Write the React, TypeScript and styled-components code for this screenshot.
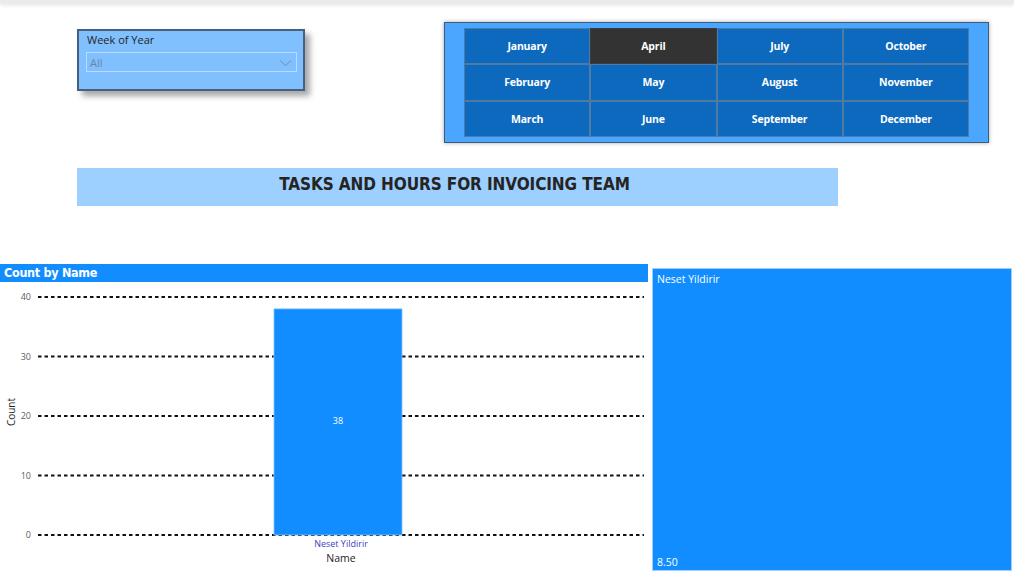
import React from "react";
import styled, { createGlobalStyle } from "styled-components";

const GlobalStyle = createGlobalStyle`
  html, body {
    margin: 0;
    padding: 0;
    background: #ffffff;
    font-family: "Open Sans", "Noto Sans", sans-serif;
  }
`;

const months = [
  ["January", "April", "July", "October"],
  ["February", "May", "August", "November"],
  ["March", "June", "September", "December"],
];

const selectedMonth = "April";

const Page = styled.div`
  width: 1014px;
  height: 573px;
  overflow: hidden;
  display: flex;
  flex-direction: column;
`;

const TopEdge = styled.div`
  height: 4px;
  background: #ebebeb;
  box-shadow: 0 1px 4px rgba(0, 0, 0, 0.12);
`;

const TopRow = styled.div`
  display: flex;
  align-items: flex-start;
  padding: 18px 0 0 77px;
  gap: 139px;
`;

const Slicer = styled.div`
  margin-top: 7px;
  width: 228px;
  height: 62px;
  box-sizing: border-box;
  background: #80c0ff;
  border: 2px solid #44617f;
  box-shadow: 5px 5px 6px rgba(0, 0, 0, 0.35);
  padding: 1px 6px 0 7px;
  display: flex;
  flex-direction: column;
`;

const SlicerTitle = styled.div`
  font-size: 11px;
  color: #252423;
  padding-left: 1px;
  line-height: 16px;
`;

const Dropdown = styled.div`
  margin-top: 4px;
  height: 20px;
  box-sizing: border-box;
  border: 1px solid #b8dbff;
  display: flex;
  align-items: center;
  justify-content: space-between;
  padding: 1px 4px 0 3px;
  font-size: 11px;
  color: #6c87a3;
`;

const MonthPanel = styled.div`
  width: 545px;
  height: 121px;
  box-sizing: border-box;
  background: #4aa6ff;
  border: 1px solid #3e5c7a;
  box-shadow: 0 0 4px rgba(0, 0, 0, 0.35);
  padding: 5px 19px 5px 19px;
`;

const MonthGrid = styled.div`
  display: grid;
  grid-template-columns: repeat(4, 1fr);
  grid-template-rows: repeat(3, 1fr);
  height: 100%;
`;

const MonthButton = styled.div<{ $active: boolean }>`
  display: flex;
  align-items: center;
  justify-content: center;
  box-sizing: border-box;
  border: 1px solid ${(p) => (p.$active ? "#3c3c3c" : "#4e7aa3")};
  background: ${(p) => (p.$active ? "#333333" : "#0d69bd")};
  color: #ffffff;
  font-weight: 700;
  font-size: 10.5px;
  letter-spacing: -0.2px;
`;

const TitleBand = styled.div`
  margin: 25px 0 0 77px;
  width: 761px;
  height: 38px;
  background: #9dcfff;
  display: flex;
  align-items: center;
  justify-content: center;
  padding: 0 6px 6px 0;
  box-sizing: border-box;
  font-family: "DejaVu Sans Condensed", "DejaVu Sans", sans-serif;
  font-stretch: condensed;
  font-weight: 700;
  font-size: 17px;
  color: #252423;
  letter-spacing: -0.1px;
`;

const BottomRow = styled.div`
  display: flex;
  margin-top: 58px;
  gap: 4px;
`;

const ChartPanel = styled.div`
  width: 648px;
  height: 307px;
  display: flex;
  flex-direction: column;
`;

const ChartHeader = styled.div`
  height: 18px;
  background: #118dff;
  color: #ffffff;
  font-family: "DejaVu Sans Condensed", "DejaVu Sans", sans-serif;
  font-stretch: condensed;
  font-weight: 700;
  font-size: 12.5px;
  line-height: 18px;
  padding-left: 4px;
  letter-spacing: -0.3px;
`;

const ChartSvg = styled.svg`
  display: block;
  flex: 1;
`;

const Card = styled.div`
  margin-top: 4px;
  width: 360px;
  height: 303px;
  box-sizing: border-box;
  background: #118dff;
  border: 1px solid #9fd0ff;
  display: flex;
  flex-direction: column;
  justify-content: space-between;
  padding: 3px 4px 1px 4px;
  color: #ffffff;
  font-size: 10.5px;
`;

const CardText = styled.div`
  line-height: 14px;
`;

const ticks = [40, 30, 20, 10, 0];
const yOf = (v: number) => 253 - v * 5.95;

const BarChart = () => (
  <ChartSvg width={648} height={289} viewBox="0 0 648 289">
    {ticks.map((t) => (
      <g key={t}>
        <text
          x={31}
          y={yOf(t) + 3}
          textAnchor="end"
          fontSize={9}
          fill="#605e5c"
          fontFamily="Open Sans, sans-serif"
        >
          {t}
        </text>
        <line
          x1={38}
          x2={644}
          y1={yOf(t)}
          y2={yOf(t)}
          stroke="#111"
          strokeWidth={2}
          strokeDasharray="3.5 3"
        />
      </g>
    ))}
    <rect x={274} y={yOf(38)} width={128} height={38 * 5.95} fill="#118dff" stroke="#7fc0ff" strokeWidth={0.8} />
    <text x={338} y={142} textAnchor="middle" fontSize={9} fill="#ffffff" fontFamily="Open Sans, sans-serif">
      38
    </text>
    <text x={341} y={265} textAnchor="middle" fontSize={9} fill="#3e3ec2" fontFamily="Open Sans, sans-serif">
      Neset Yildirir
    </text>
    <text x={341} y={280} textAnchor="middle" fontSize={10.5} fill="#252423" fontFamily="Open Sans, sans-serif">
      Name
    </text>
    <text
      x={0}
      y={0}
      transform="translate(15 130) rotate(-90)"
      textAnchor="middle"
      fontSize={10}
      fill="#252423"
      fontFamily="Open Sans, sans-serif"
    >
      Count
    </text>
  </ChartSvg>
);

const Chevron = () => (
  <svg width="13" height="8" viewBox="0 0 13 8">
    <path d="M1 1.5 L6.5 6.5 L12 1.5" fill="none" stroke="#6f8db0" strokeWidth="1" />
  </svg>
);

export default function App() {
  return (
    <Page>
      <GlobalStyle />
      <TopEdge />
      <TopRow>
        <Slicer>
          <SlicerTitle>Week of Year</SlicerTitle>
          <Dropdown>
            <span>All</span>
            <Chevron />
          </Dropdown>
        </Slicer>
        <MonthPanel>
          <MonthGrid>
            {months.flat().map((m) => (
              <MonthButton key={m} $active={m === selectedMonth}>
                {m}
              </MonthButton>
            ))}
          </MonthGrid>
        </MonthPanel>
      </TopRow>
      <TitleBand>TASKS AND HOURS FOR INVOICING TEAM</TitleBand>
      <BottomRow>
        <ChartPanel>
          <ChartHeader>Count by Name</ChartHeader>
          <BarChart />
        </ChartPanel>
        <Card>
          <CardText>Neset Yildirir</CardText>
          <CardText>8.50</CardText>
        </Card>
      </BottomRow>
    </Page>
  );
}
